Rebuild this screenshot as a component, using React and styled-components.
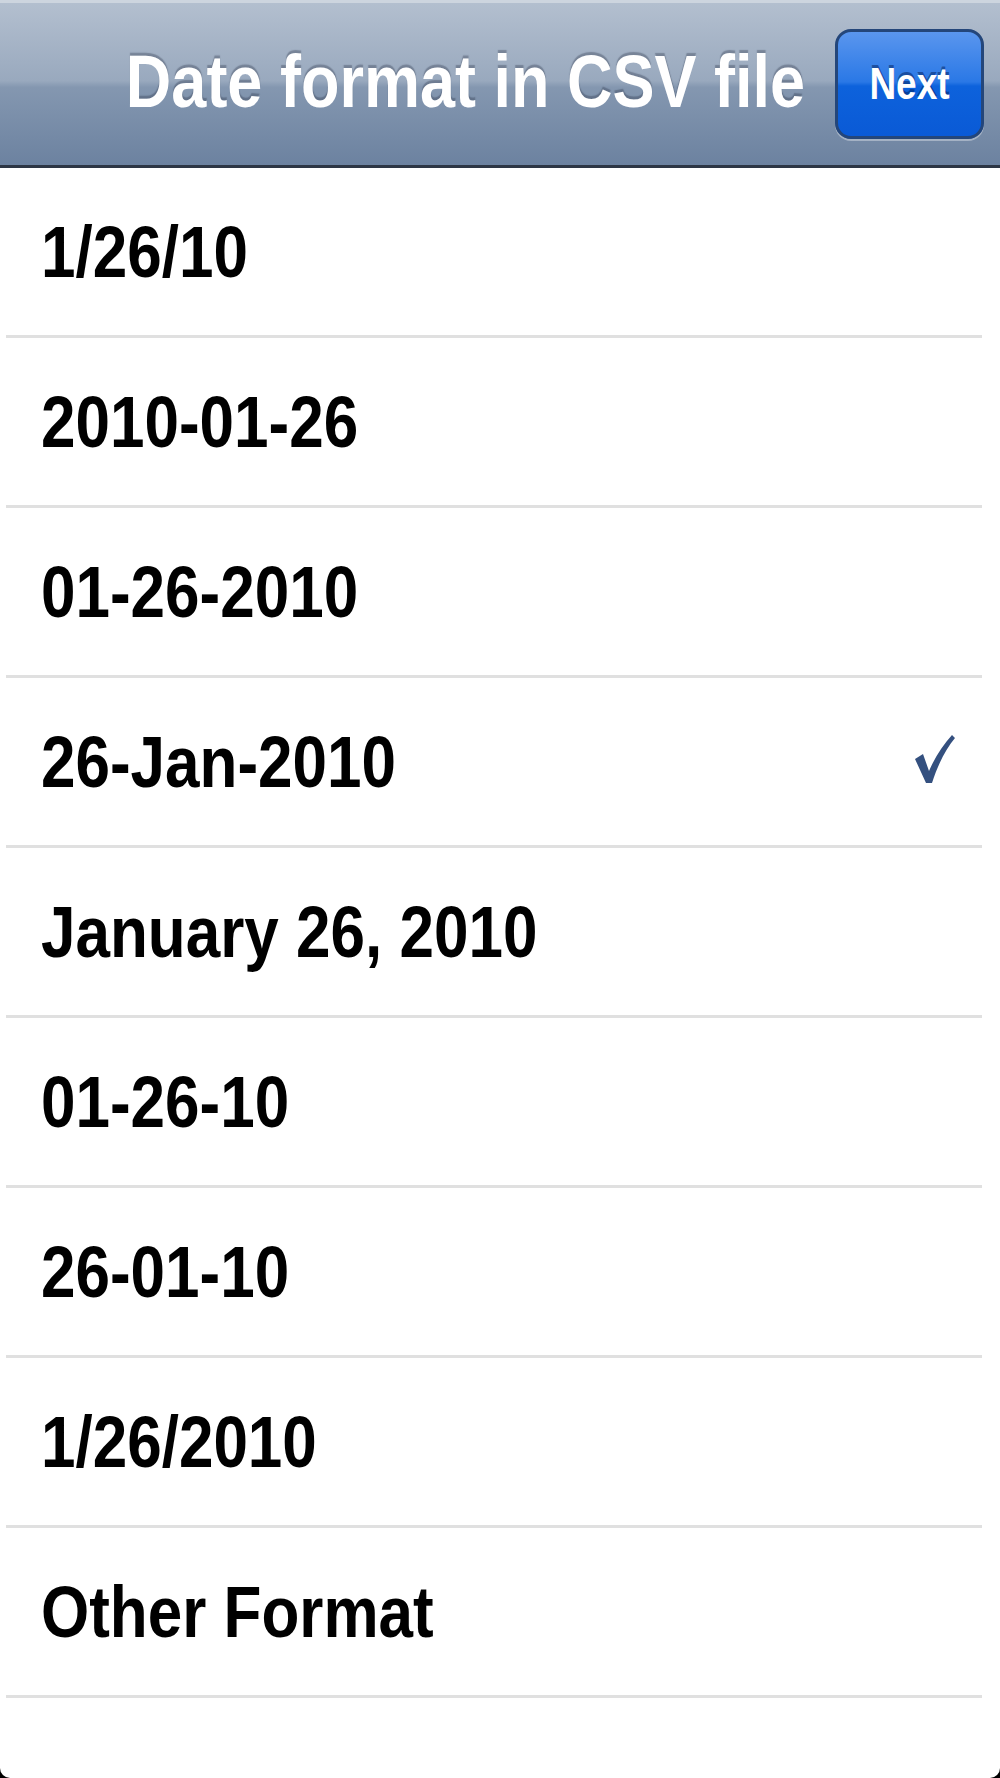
import React from 'react'
import styled, { createGlobalStyle } from 'styled-components'

const formats = [
    '1/26/10',
    '2010-01-26',
    '01-26-2010',
    '26-Jan-2010',
    'January 26, 2010',
    '01-26-10',
    '26-01-10',
    '1/26/2010',
    'Other Format',
]

const selected = '26-Jan-2010'

function CheckMark() {
    return (
        <svg width='40' height='50' viewBox='0 0 40 50'>
            <path
                d='M0 25 L8 20 L14 37 C20 23 28 11 37 1 L40 4 C31 15 23 30 17 49 L11 49 Z'
                fill='#34507f'
            />
        </svg>
    )
}

function App() {
    return (
        <>
            <GlobalStyle />
            <Screen>
                <NavBar>
                    <Title>
                        <span>Date format in CSV file</span>
                    </Title>
                    <NextButton>
                        <span>Next</span>
                    </NextButton>
                </NavBar>
                <List>
                    {formats.map((f) => (
                        <Row key={f}>
                            <Label>
                                <span>{f}</span>
                            </Label>
                            {f === selected && (
                                <Check>
                                    <CheckMark />
                                </Check>
                            )}
                        </Row>
                    ))}
                </List>
            </Screen>
        </>
    )
}

export default App

const GlobalStyle = createGlobalStyle`
    html, body {
        margin: 0;
        padding: 0;
        background: #000;
    }
    body {
        font-family: 'Liberation Sans', Arial, sans-serif;
    }
`

const Screen = styled.div`
    width: 1000px;
    height: 1778px;
    background: #fff;
    border-radius: 0 0 10px 10px;
    overflow: hidden;
    display: flex;
    flex-direction: column;
`

const NavBar = styled.header`
    height: 168px;
    flex-shrink: 0;
    display: flex;
    align-items: center;
    justify-content: flex-end;
    gap: 30px;
    padding-right: 16px;
    box-sizing: border-box;
    border-top: 3px solid #cdd5df;
    border-bottom: 3px solid #2d3644;
    background: linear-gradient(
        to bottom,
        #b3bfcf 0%,
        #99a9be 48%,
        #8497b0 52%,
        #6c82a0 100%
    );
`

const Title = styled.h1`
    margin: 0 0 6px;
    font-size: 63px;
    font-weight: bold;
    color: #fff;
    white-space: nowrap;
    text-shadow: 0 -2px 1px rgba(40, 50, 70, 0.35);

    span {
        display: inline-block;
        transform: scaleY(1.17);
    }
`

const NextButton = styled.button`
    width: 149px;
    height: 110px;
    padding: 0;
    border: 3px solid #24467a;
    border-radius: 16px;
    background: linear-gradient(to bottom, #5a96ee 0%, #2a78e6 48%, #0d62dc 52%, #0a5ad6 100%);
    box-shadow: 0 2px 0 rgba(255, 255, 255, 0.35);
    color: #fff;
    font-family: 'Liberation Sans', Arial, sans-serif;
    font-size: 37px;
    font-weight: bold;
    text-shadow: 0 -2px 0 rgba(0, 30, 90, 0.5);

    span {
        display: inline-block;
        transform: scaleY(1.22);
    }
`

const List = styled.ul`
    list-style: none;
    margin: 0;
    padding: 0;
`

const Row = styled.li`
    position: relative;
    height: 170px;
    display: flex;
    align-items: center;
    justify-content: space-between;
    padding: 0 45px 3px 41px;
    box-sizing: border-box;

    &:after {
        content: '';
        position: absolute;
        left: 6px;
        right: 18px;
        bottom: 0;
        height: 3px;
        background: #e0e0e0;
    }
`

const Label = styled.div`
    font-size: 62px;
    font-weight: bold;
    color: #000;
    white-space: nowrap;

    span {
        display: inline-block;
        transform: scaleY(1.17);
    }
`

const Check = styled.div`
    display: flex;
    align-items: center;
    margin-bottom: 6px;
`
